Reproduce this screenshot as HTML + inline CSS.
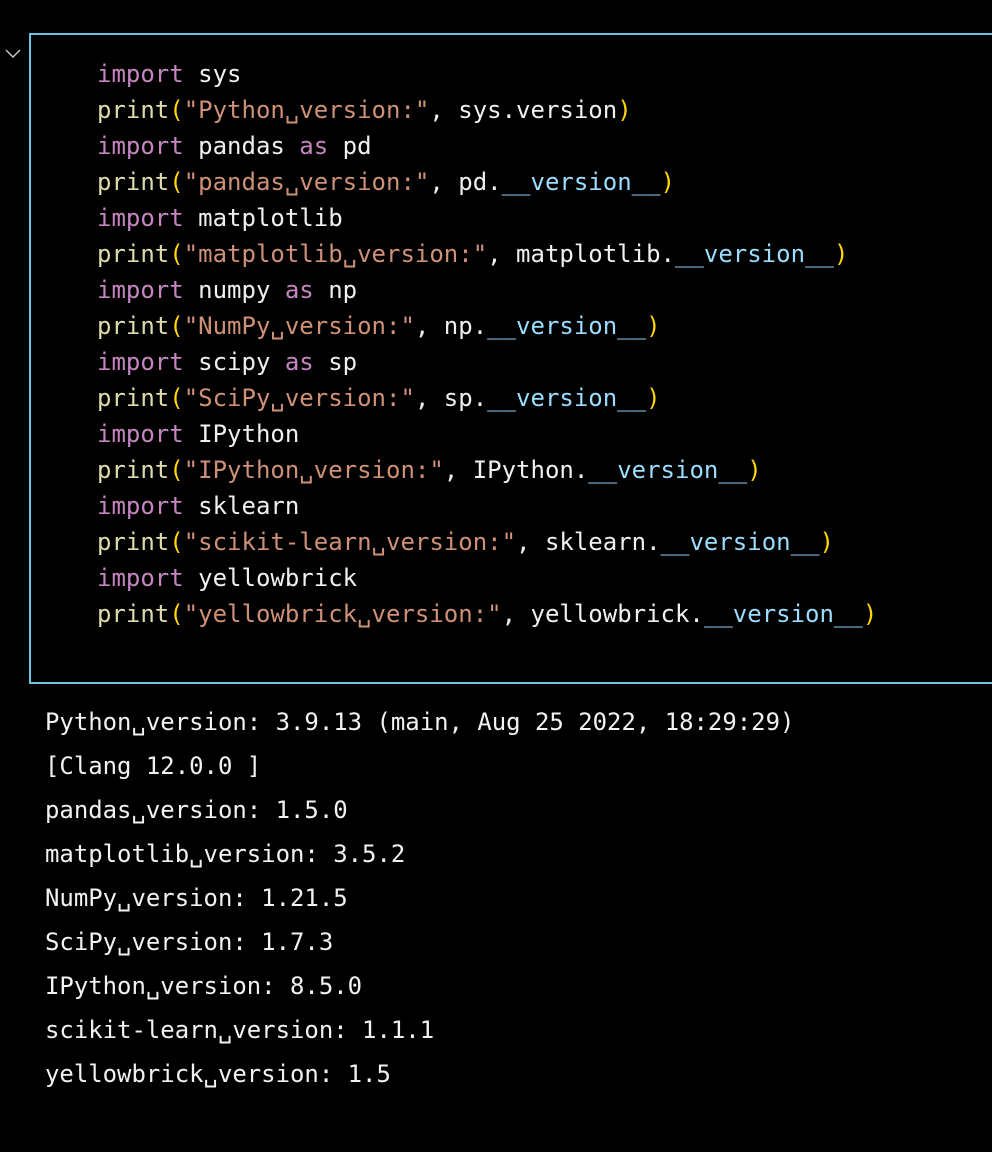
<!DOCTYPE html>
<html><head><meta charset="utf-8"><style>
body{margin:0;background:#000;width:992px;height:1152px;overflow:hidden;position:relative;font-family:"DejaVu Sans Mono","Liberation Mono",monospace;}
.cell{position:absolute;left:29px;top:33px;width:980px;height:651px;border:2px solid #6cc4e4;box-sizing:border-box;}
.code{position:absolute;left:97px;top:56px;font-size:24px;line-height:36px;color:#f0f0f0;white-space:pre;}
.k{color:#c586c0}.f{color:#dcdcaa}.s{color:#ce9178}.p{color:#ffd700}.v{color:#9cdcfe}
.out{position:absolute;left:45px;top:700px;font-size:23.95px;line-height:44px;color:#f2f2f2;white-space:pre;}
.chev{position:absolute;left:4px;top:47px;}
</style></head><body>
<svg class="chev" width="18" height="12"><path d="M2 3 L9 10 L16 3" stroke="#ccc" stroke-width="1.4" fill="none"/></svg>
<div class="cell"></div>
<div class="code"><span class="k">import</span> sys
<span class="f">print</span><span class="p">(</span><span class="s">"Python␣version:"</span>, sys.version<span class="p">)</span>
<span class="k">import</span> pandas <span class="k">as</span> pd
<span class="f">print</span><span class="p">(</span><span class="s">"pandas␣version:"</span>, pd.<span class="v">__version__</span><span class="p">)</span>
<span class="k">import</span> matplotlib
<span class="f">print</span><span class="p">(</span><span class="s">"matplotlib␣version:"</span>, matplotlib.<span class="v">__version__</span><span class="p">)</span>
<span class="k">import</span> numpy <span class="k">as</span> np
<span class="f">print</span><span class="p">(</span><span class="s">"NumPy␣version:"</span>, np.<span class="v">__version__</span><span class="p">)</span>
<span class="k">import</span> scipy <span class="k">as</span> sp
<span class="f">print</span><span class="p">(</span><span class="s">"SciPy␣version:"</span>, sp.<span class="v">__version__</span><span class="p">)</span>
<span class="k">import</span> IPython
<span class="f">print</span><span class="p">(</span><span class="s">"IPython␣version:"</span>, IPython.<span class="v">__version__</span><span class="p">)</span>
<span class="k">import</span> sklearn
<span class="f">print</span><span class="p">(</span><span class="s">"scikit-learn␣version:"</span>, sklearn.<span class="v">__version__</span><span class="p">)</span>
<span class="k">import</span> yellowbrick
<span class="f">print</span><span class="p">(</span><span class="s">"yellowbrick␣version:"</span>, yellowbrick.<span class="v">__version__</span><span class="p">)</span></div>
<div class="out">Python␣version: 3.9.13 (main, Aug 25 2022, 18:29:29)
[Clang 12.0.0 ]
pandas␣version: 1.5.0
matplotlib␣version: 3.5.2
NumPy␣version: 1.21.5
SciPy␣version: 1.7.3
IPython␣version: 8.5.0
scikit-learn␣version: 1.1.1
yellowbrick␣version: 1.5</div>
</body></html>
